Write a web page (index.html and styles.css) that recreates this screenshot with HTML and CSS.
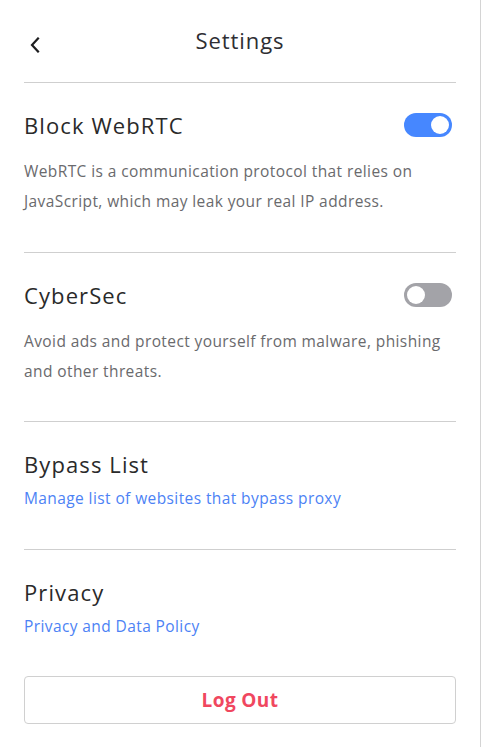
FILE: index.html
```html
<!DOCTYPE html>
<html>
<head>
<meta charset="utf-8">
<link rel="stylesheet" href="styles.css">
</head>
<body>
<div class="page">
  <header class="header">
    <button class="back" aria-label="Back">
      <svg width="10" height="16" viewBox="0 0 10 16"><path d="M8 1.5 L2 8 L8 14.5" fill="none" stroke="#1d1d1f" stroke-width="2.2" stroke-linecap="square"/></svg>
    </button>
    <h1 class="title">Settings</h1>
  </header>
  <section class="item first">
    <div class="row">
      <h2 class="item-title">Block WebRTC</h2>
      <span class="toggle on"><span class="knob"></span></span>
    </div>
    <p class="desc">WebRTC is a communication protocol that relies on JavaScript, which may leak your real IP address.</p>
  </section>
  <section class="item">
    <div class="row">
      <h2 class="item-title">CyberSec</h2>
      <span class="toggle off"><span class="knob"></span></span>
    </div>
    <p class="desc">Avoid ads and protect yourself from malware, phishing and other threats.</p>
  </section>
  <section class="item link-item">
    <h2 class="item-title">Bypass List</h2>
    <a class="link" href="#">Manage list of websites that bypass proxy</a>
  </section>
  <section class="item link-item last">
    <h2 class="item-title">Privacy</h2>
    <a class="link" href="#">Privacy and Data Policy</a>
  </section>
  <button class="logout">Log Out</button>
</div>
</body>
</html>
```
FILE: styles.css
```css
html, body {
  margin: 0;
  padding: 0;
  background: #fff;
}
body {
  font-family: "Open Sans", "Lato", sans-serif;
  color: #2b2b2b;
}
.page {
  width: 481px;
  height: 747px;
  box-sizing: border-box;
  border-right: 1px solid #d4d4d4;
  padding: 0 24px;
}
.header {
  position: relative;
  height: 82px;
  display: flex;
  align-items: center;
  justify-content: center;
  border-bottom: 1px solid #cfcfcf;
}
.back {
  position: absolute;
  left: 6px;
  top: 37px;
  border: 0;
  background: none;
  padding: 0;
  width: 10px;
  height: 16px;
  display: flex;
}
.title {
  margin: 0;
  font-size: 22px;
  font-weight: 400;
  letter-spacing: 0.9px;
  color: #2e2e33;
  position: relative;
  top: -1px;
}
.item {
  border-bottom: 1px solid #cfcfcf;
  padding: 27px 0 35px;
}
.item.first {
  padding-bottom: 36px;
}
.row {
  display: flex;
  align-items: center;
  justify-content: space-between;
}
.item-title {
  margin: 0;
  font-size: 22px;
  font-weight: 400;
  color: #2a2a2a;
  line-height: 30px;
  letter-spacing: 1.1px;
}
.desc {
  margin: 16px 0 0;
  font-size: 15.5px;
  line-height: 30px;
  color: #6a6a6d;
  letter-spacing: 0.4px;
}
.toggle {
  width: 48px;
  height: 24px;
  margin-right: 4px;
  border-radius: 12px;
  display: flex;
  align-items: center;
  padding: 0 3px;
  box-sizing: border-box;
}
.toggle.on {
  background: #4687ff;
  justify-content: flex-end;
}
.toggle.off {
  background: #a3a3a8;
  justify-content: flex-start;
}
.knob {
  width: 18px;
  height: 18px;
  border-radius: 50%;
  background: #fff;
}
.link-item {
  padding: 27px 0 39px;
}
.link-item .link {
  display: block;
  margin-top: 7px;
}
.link {
  font-size: 15.5px;
  line-height: 24px;
  color: #4c82f5;
  text-decoration: none;
  letter-spacing: 0.4px;
}
.last {
  border-bottom: 0;
  padding-bottom: 38px;
}
.logout {
  display: block;
  width: 100%;
  height: 48px;
  border: 1px solid #d0d0d0;
  border-radius: 4px;
  background: #fff;
  font-family: inherit;
  font-size: 19px;
  font-weight: 700;
  letter-spacing: 0.4px;
  color: #f0475f;
}
```
